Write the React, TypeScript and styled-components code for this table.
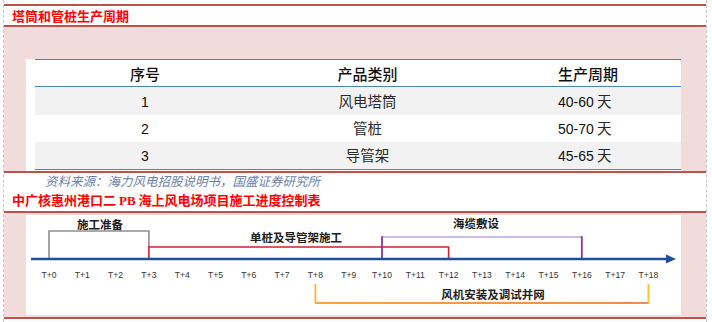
import React from 'react'
import styled, { createGlobalStyle } from 'styled-components'

const GlobalStyle = createGlobalStyle`
  html, body {
    margin: 0;
    padding: 0;
    background: #ffffff;
  }
  body {
    font-family: "Noto Sans CJK SC", "Liberation Sans", sans-serif;
  }
`

const RED_LINE = '#c0504d'
const PINK = '#f2dcdb'
const TABLE_BLUE = '#4f81bd'

const Frame = styled.div`
  margin-left: 3px;
  width: 702px;
  height: 322px;
  border-left: 1px dashed #c4c4c4;
  border-right: 1px dashed #c4c4c4;
  display: flex;
  flex-direction: column;
`

const TitleBar = styled.div`
  margin-top: 4px;
  height: 19px;
  border-top: 2px solid ${RED_LINE};
  border-bottom: 2px solid ${RED_LINE};
  display: flex;
  align-items: center;
  padding-left: 8px;
`

const Title = styled.div`
  color: #ff0000;
  font-size: 13px;
  font-weight: 700;
  line-height: 1;
`

const Serif = styled.span`
  font-family: "Liberation Serif", serif;
  font-weight: 700;
`

const PinkArea = styled.div<{ $top: number; $bottom: number }>`
  background: ${PINK};
  padding: ${(p) => p.$top}px 25px ${(p) => p.$bottom}px 22px;
`

const WhitePanel = styled.div<{ $height: number }>`
  background: #ffffff;
  height: ${(p) => p.$height}px;
  padding-left: 9px;
`

const Table = styled.div`
  border-top: 1px solid ${TABLE_BLUE};
  border-bottom: 1px solid ${TABLE_BLUE};
`

const Row = styled.div<{ $height: number; $shaded?: boolean; $head?: boolean }>`
  display: grid;
  grid-template-columns: 220px 225px 1fr;
  height: ${(p) => p.$height}px;
  background: ${(p) => (p.$shaded ? '#f2f2f2' : '#ffffff')};
  border-bottom: ${(p) => (p.$head ? `1px solid ${TABLE_BLUE}` : 'none')};
  align-items: center;
`

const Cell = styled.div<{ $head?: boolean; $left?: boolean }>`
  text-align: ${(p) => (p.$left ? 'left' : 'center')};
  padding-left: ${(p) => (p.$left ? '78px' : '0')};
  font-size: ${(p) => (p.$head ? '15px' : '14.5px')};
  font-weight: ${(p) => (p.$head ? 500 : 400)};
  color: ${(p) => (p.$head ? '#111' : '#2a2a2a')};
  line-height: 1;
  white-space: nowrap;
`

const Num = styled.span`
  font-family: "Liberation Sans", sans-serif;
  font-size: 14px;
  color: #111;
`

const SourceRow = styled.div`
  border-top: 2px solid ${RED_LINE};
  height: 16px;
  padding-left: 41px;
  display: flex;
  align-items: center;
`

const SourceText = styled.div`
  font-size: 12.5px;
  font-style: italic;
  color: #6b7fa6;
  line-height: 1;
`

const SubTitleBar = styled.div`
  height: 22px;
  border-bottom: 2px solid ${RED_LINE};
  display: flex;
  align-items: center;
  padding-left: 8px;
`

const BottomLine = styled.div`
  border-top: 2px solid ${RED_LINE};
`

const ChartSvg = styled.svg`
  display: block;
  margin-left: -9px;
  overflow: visible;
`

const rows = [
  { no: '1', name: '风电塔筒', period: '40-60' },
  { no: '2', name: '管桩', period: '50-70' },
  { no: '3', name: '导管架', period: '45-65' },
]

const tickX = (i: number) => 23 + i * 33.3

const Timeline = () => {
  const labelStyle = {
    fontFamily: '"Noto Sans CJK SC", sans-serif',
    fontSize: 11.5,
    fontWeight: 700,
    fill: '#1e1e1e',
  }
  return (
    <ChartSvg width={655} height={100} viewBox="0 0 655 100">
      <defs>
        <linearGradient
          id="orangeLine"
          gradientUnits="userSpaceOnUse"
          x1={tickX(8)}
          y1="0"
          x2={tickX(18)}
          y2="0"
        >
          <stop offset="0" stopColor="#f7a53c" />
          <stop offset="1" stopColor="#f28a52" />
        </linearGradient>
      </defs>

      {/* 施工准备 */}
      <polyline
        points={`${tickX(0)},44 ${tickX(0)},16 ${tickX(3)},16 ${tickX(3)},32`}
        fill="none"
        stroke="#8f8f8f"
        strokeWidth={1.6}
      />
      <text x={74} y={13.5} textAnchor="middle" style={labelStyle}>
        施工准备
      </text>

      {/* 单桩及导管架施工 */}
      <polyline
        points={`${tickX(3)},44 ${tickX(3)},32 ${tickX(12)},32 ${tickX(12)},44`}
        fill="none"
        stroke="#d2232a"
        strokeWidth={1.6}
      />
      <text x={270} y={26.5} textAnchor="middle" style={labelStyle}>
        单桩及导管架施工
      </text>

      {/* 海缆敷设 */}
      <line x1={tickX(10)} y1={22} x2={tickX(16)} y2={22} stroke="#bba4dc" strokeWidth={1.6} />
      <line x1={tickX(10)} y1={21.2} x2={tickX(10)} y2={44} stroke="#7a35b5" strokeWidth={1.8} />
      <line x1={tickX(16)} y1={21.2} x2={tickX(16)} y2={44} stroke="#7a35b5" strokeWidth={1.8} />
      <text x={450} y={12.5} textAnchor="middle" style={labelStyle}>
        海缆敷设
      </text>

      {/* axis */}
      <line x1={5} y1={44} x2={642} y2={44} stroke="#1f4f9f" strokeWidth={2.6} />
      <polygon points="640,39.5 650,44 640,48.5" fill="#1f4f9f" />

      {Array.from({ length: 19 }).map((_, i) => (
        <text
          key={i}
          x={tickX(i)}
          y={63}
          textAnchor="middle"
          style={{
            fontFamily: '"Liberation Sans", sans-serif',
            fontSize: 8.6,
            fill: '#333',
          }}
        >
          {`T+${i}`}
        </text>
      ))}

      {/* 风机安装及调试并网 */}
      <line x1={tickX(8)} y1={88} x2={tickX(18)} y2={88} stroke="url(#orangeLine)" strokeWidth={1.8} />
      <line x1={tickX(8)} y1={69} x2={tickX(8)} y2={88.8} stroke="#fbb62a" strokeWidth={1.8} />
      <line x1={tickX(18)} y1={69} x2={tickX(18)} y2={88.8} stroke="#ffc21a" strokeWidth={1.8} />
      <text x={467} y={84} textAnchor="middle" style={labelStyle}>
        风机安装及调试并网
      </text>
    </ChartSvg>
  )
}

const App = () => {
  return (
    <>
      <GlobalStyle />
      <Frame>
        <TitleBar>
          <Title>塔筒和管桩生产周期</Title>
        </TitleBar>
        <PinkArea $top={32} $bottom={0}>
          <WhitePanel $height={112}>
            <Table>
              <Row $height={26} $head>
                <Cell $head>序号</Cell>
                <Cell $head>产品类别</Cell>
                <Cell $head $left>生产周期</Cell>
              </Row>
              {rows.map((r, i) => (
                <Row key={r.no} $height={i === 0 ? 28 : 27} $shaded={i % 2 === 0}>
                  <Cell>
                    <Num>{r.no}</Num>
                  </Cell>
                  <Cell>{r.name}</Cell>
                  <Cell $left>
                    <Num>{r.period}</Num> 天
                  </Cell>
                </Row>
              ))}
            </Table>
          </WhitePanel>
        </PinkArea>
        <SourceRow>
          <SourceText>资料来源：海力风电招股说明书，国盛证券研究所</SourceText>
        </SourceRow>
        <SubTitleBar>
          <Title>
            中广核惠州港口二 <Serif>PB</Serif> 海上风电场项目施工进度控制表
          </Title>
        </SubTitleBar>
        <PinkArea $top={2} $bottom={2}>
          <WhitePanel $height={100}>
            <Timeline />
          </WhitePanel>
        </PinkArea>
        <BottomLine />
      </Frame>
    </>
  )
}

export default App
